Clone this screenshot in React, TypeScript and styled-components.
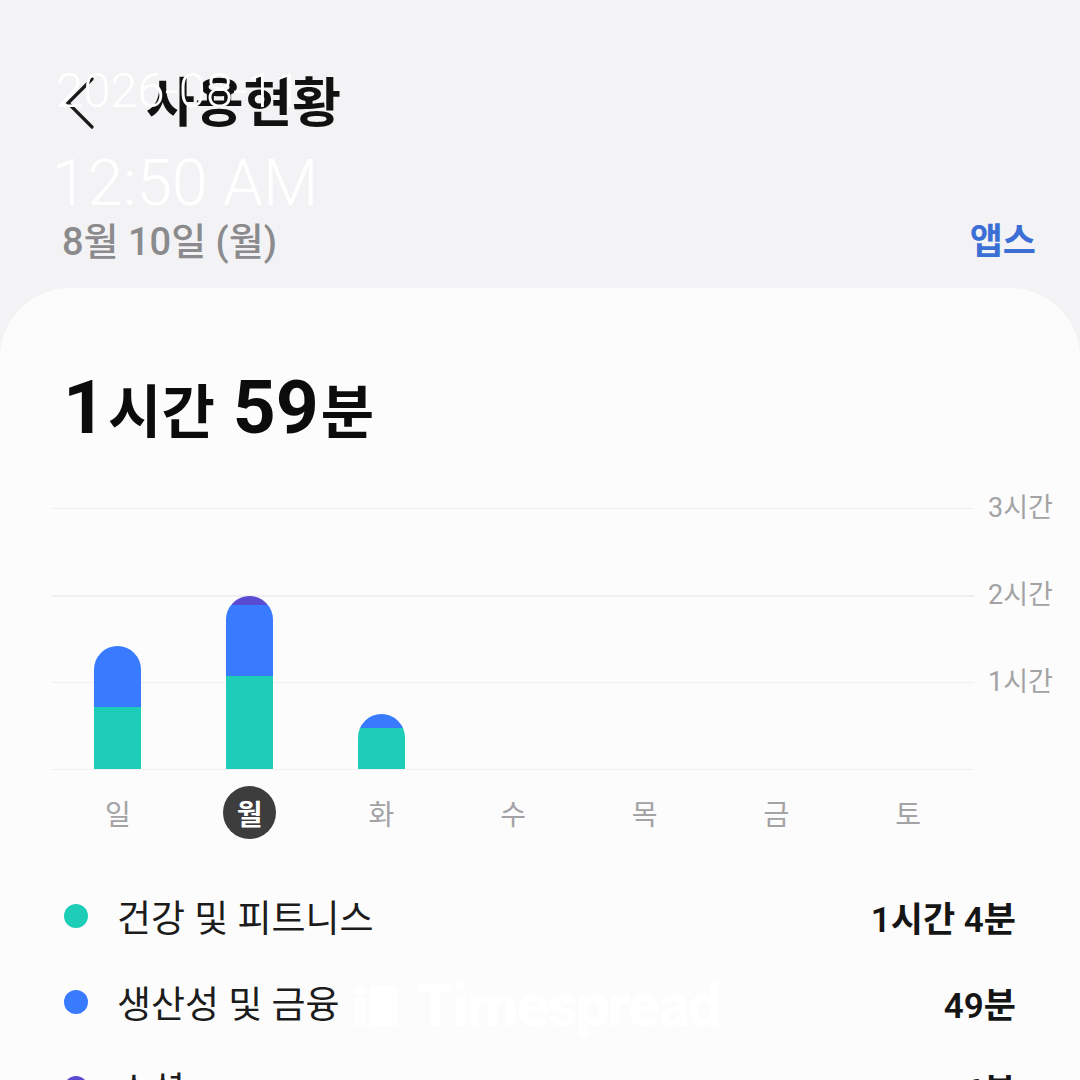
import styled, { createGlobalStyle } from 'styled-components';

const GlobalStyle = createGlobalStyle`
    html, body {
        margin: 0;
        padding: 0;
        width: 1080px;
        height: 1080px;
        overflow: hidden;
        background: #f3f3f5;
    }
    body {
        font-family: Roboto, "Noto Sans CJK KR", sans-serif;
    }
`;

const COLORS = {
    health: '#1ecdb7',
    work: '#387bff',
    social: '#5a4bd3',
};

const HOUR_PX = 87;

interface DayData {
    label: string;
    health: number;
    work: number;
    social: number;
    selected?: boolean;
}

const days: DayData[] = [
    { label: '일', health: 43, work: 42, social: 0 },
    { label: '월', health: 64, work: 49, social: 6, selected: true },
    { label: '화', health: 28, work: 10, social: 0 },
    { label: '수', health: 0, work: 0, social: 0 },
    { label: '목', health: 0, work: 0, social: 0 },
    { label: '금', health: 0, work: 0, social: 0 },
    { label: '토', health: 0, work: 0, social: 0 },
];

const legend = [
    { name: '건강 및 피트니스', value: '1시간 4분', color: COLORS.health },
    { name: '생산성 및 금융', value: '49분', color: COLORS.work },
    { name: '소셜', value: '6분', color: COLORS.social },
];

const toPx = (min: number) => (min / 60) * HOUR_PX;

const App = () => {
    return (
        <>
            <GlobalStyle />
            <Screen>
                <Header>
                    <BackButton>
                        <svg width="32" height="52" viewBox="0 0 32 52" fill="none">
                            <path d="M28 2 L4 26 L28 50" stroke="#1a1a1a" strokeWidth="3.2" strokeLinecap="round" />
                        </svg>
                    </BackButton>
                    <Title>사용현황</Title>
                </Header>
                <DateRow>
                    <DateText>8월 10일 (월)</DateText>
                    <AppsLink>앱스</AppsLink>
                </DateRow>
                <Card>
                    <Total>
                        <Num>1</Num>
                        <Unit>시간</Unit>
                        <Num gap>59</Num>
                        <Unit>분</Unit>
                    </Total>
                    <Chart>
                        <Plot>
                            {days.map((d) => (
                                <BarSlot key={d.label}>
                                    {d.health + d.work + d.social > 0 && (
                                        <Bar>
                                            <Segment color={COLORS.health} style={{ height: toPx(d.health) }} />
                                            <Segment color={COLORS.work} style={{ height: toPx(d.work) }} />
                                            <Segment color={COLORS.social} style={{ height: toPx(d.social) }} />
                                        </Bar>
                                    )}
                                </BarSlot>
                            ))}
                        </Plot>
                        <Axis>
                            <AxisLabel>3시간</AxisLabel>
                            <AxisLabel>2시간</AxisLabel>
                            <AxisLabel>1시간</AxisLabel>
                        </Axis>
                        <DayRow>
                            {days.map((d) => (
                                <DayCell key={d.label}>
                                    <DayLabel selected={d.selected}>{d.label}</DayLabel>
                                </DayCell>
                            ))}
                        </DayRow>
                    </Chart>
                    <Legend>
                        {legend.map((l) => (
                            <LegendRow key={l.name}>
                                <Dot color={l.color} />
                                <LegendName>{l.name}</LegendName>
                                <LegendValue>{l.value}</LegendValue>
                            </LegendRow>
                        ))}
                    </Legend>
                </Card>

                <StampDate>2026-08-11</StampDate>
                <StampTime>12:50 AM</StampTime>
                <Watermark>
                    <svg width="42" height="40" viewBox="0 0 42 40">
                        <rect x="0" y="0" width="10" height="9" fill="#fff" />
                        <rect x="0" y="12" width="10" height="28" fill="#fff" />
                        <rect x="15" y="0" width="27" height="40" fill="#fff" />
                    </svg>
                    Timespread
                </Watermark>
            </Screen>
        </>
    );
};

const Screen = styled.div`
    position: relative;
    width: 1080px;
    height: 1080px;
    overflow: hidden;
    background: #f3f3f5;
    display: flex;
    flex-direction: column;
`;

const Header = styled.div`
    flex-shrink: 0;
    height: 100px;
    margin-top: 54px;
    padding-left: 64px;
    display: flex;
    align-items: center;
    box-sizing: border-box;
`;

const BackButton = styled.div`
    width: 32px;
    height: 52px;
    display: flex;
    margin-top: -2px;
`;

const Title = styled.h1`
    margin: 2px 0 0 50px;
    font-size: 53px;
    font-weight: 700;
    color: #111;
    line-height: 1.2;
`;

const DateRow = styled.div`
    flex-shrink: 0;
    display: flex;
    justify-content: space-between;
    align-items: center;
    padding: 0 44px 0 62px;
    margin-top: 49px;
    height: 70px;
`;

const DateText = styled.div`
    font-size: 38px;
    font-weight: 500;
    color: #8b8b8d;
`;

const AppsLink = styled.div`
    font-size: 36px;
    font-weight: 600;
    color: #3b6fd6;
`;

const Card = styled.div`
    flex-shrink: 0;
    margin-top: 15px;
    background: #fcfcfc;
    border-radius: 70px 70px 0 0;
    padding-top: 82px;
    padding-bottom: 40px;
`;

const Total = styled.div`
    padding-left: 63px;
    height: 74px;
    display: flex;
    align-items: baseline;
    color: #0c0c0c;
`;

const Num = styled.span<{ gap?: boolean }>`
    font-size: 75px;
    font-weight: 700;
    line-height: 1;
    margin-left: ${({ gap }) => (gap ? '18px' : '0')};
    margin-right: 2px;
`;

const Unit = styled.span`
    font-size: 58px;
    font-weight: 700;
    line-height: 1;
`;

const Chart = styled.div`
    margin-top: 64px;
    padding-left: 52px;
    display: grid;
    grid-template-columns: 922px 1fr;
    grid-template-rows: 262px auto;
`;

const Plot = styled.div`
    display: flex;
    align-items: flex-end;
    background-image: repeating-linear-gradient(
        to bottom,
        #efefef 0,
        #efefef 1.5px,
        transparent 1.5px,
        transparent ${HOUR_PX}px
    );
    padding-bottom: 1px;
    box-sizing: border-box;
`;

const BarSlot = styled.div`
    flex: 1;
    display: flex;
    justify-content: center;
    align-items: flex-end;
`;

const Bar = styled.div`
    width: 47px;
    display: flex;
    flex-direction: column-reverse;
    border-radius: 24px 24px 0 0;
    overflow: hidden;
`;

const Segment = styled.div<{ color: string }>`
    background: ${({ color }) => color};
    flex-shrink: 0;
`;

const Axis = styled.div`
    display: flex;
    flex-direction: column;
    padding-left: 14px;
`;

const AxisLabel = styled.div`
    height: ${HOUR_PX}px;
    font-size: 27px;
    color: #a3a3a5;
    line-height: 1;
    transform: translateY(-13px);
`;

const DayRow = styled.div`
    display: flex;
    padding-top: 16px;
`;

const DayCell = styled.div`
    flex: 1;
    display: flex;
    justify-content: center;
`;

const DayLabel = styled.div<{ selected?: boolean }>`
    width: 53px;
    height: 53px;
    border-radius: 50%;
    display: flex;
    align-items: center;
    justify-content: center;
    font-size: 28px;
    font-weight: ${({ selected }) => (selected ? 700 : 400)};
    color: ${({ selected }) => (selected ? '#ffffff' : '#a3a3a5')};
    background: ${({ selected }) => (selected ? '#3d3d3d' : 'transparent')};
`;

const Legend = styled.div`
    margin-top: 34px;
    padding: 0 64px;
    display: flex;
    flex-direction: column;
`;

const LegendRow = styled.div`
    height: 86px;
    display: flex;
    align-items: center;
`;

const Dot = styled.span<{ color: string }>`
    width: 24px;
    height: 24px;
    border-radius: 50%;
    background: ${({ color }) => color};
    flex-shrink: 0;
`;

const LegendName = styled.div`
    flex: 1;
    margin-left: 29px;
    font-size: 37px;
    color: #1c1c1c;
`;

const LegendValue = styled.div`
    font-size: 35px;
    font-weight: 600;
    color: #151515;
`;

const StampDate = styled.div`
    position: absolute;
    left: 56px;
    top: 66px;
    font-size: 49px;
    font-weight: 300;
    color: #ffffff;
    line-height: 1;
`;

const StampTime = styled.div`
    position: absolute;
    left: 52px;
    top: 152px;
    font-size: 64px;
    font-weight: 300;
    color: #ffffff;
    line-height: 1;
`;

const Watermark = styled.div`
    position: absolute;
    left: 355px;
    top: 976px;
    display: flex;
    align-items: center;
    gap: 20px;
    font-size: 60px;
    font-weight: 800;
    color: #ffffff;
    letter-spacing: -2px;
    line-height: 1;
`;

export default App;
